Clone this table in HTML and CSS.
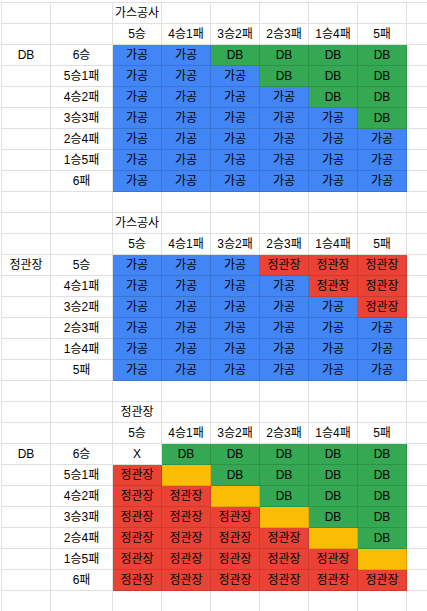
FILE: index.html
```html
<!DOCTYPE html>
<html lang="ko">
<head>
	<meta charset="UTF-8">
	<title>시나리오</title>
	<link rel="stylesheet" href="styles.css">
</head>
<body>
	<table class="sheet">
		<colgroup>
			<col class="c-a"><col class="c-b">
			<col class="c-n"><col class="c-n"><col class="c-n"><col class="c-n"><col class="c-n"><col class="c-n">
			<col class="c-n">
		</colgroup>
		<!--가스공사 vs DB-->
		<tr><td></td><td></td><td>가스공사</td><td></td><td></td><td></td><td></td><td></td><td></td></tr>
		<tr><td></td><td></td><td>5승</td><td>4승1패</td><td>3승2패</td><td>2승3패</td><td>1승4패</td><td>5패</td><td></td></tr>
		<tr><td>DB</td><td>6승</td><td class="b">가공</td><td class="b">가공</td><td class="g">DB</td><td class="g">DB</td><td class="g">DB</td><td class="g">DB</td><td></td></tr>
		<tr><td></td><td>5승1패</td><td class="b">가공</td><td class="b">가공</td><td class="b">가공</td><td class="g">DB</td><td class="g">DB</td><td class="g">DB</td><td></td></tr>
		<tr><td></td><td>4승2패</td><td class="b">가공</td><td class="b">가공</td><td class="b">가공</td><td class="b">가공</td><td class="g">DB</td><td class="g">DB</td><td></td></tr>
		<tr><td></td><td>3승3패</td><td class="b">가공</td><td class="b">가공</td><td class="b">가공</td><td class="b">가공</td><td class="b">가공</td><td class="g">DB</td><td></td></tr>
		<tr><td></td><td>2승4패</td><td class="b">가공</td><td class="b">가공</td><td class="b">가공</td><td class="b">가공</td><td class="b">가공</td><td class="b">가공</td><td></td></tr>
		<tr><td></td><td>1승5패</td><td class="b">가공</td><td class="b">가공</td><td class="b">가공</td><td class="b">가공</td><td class="b">가공</td><td class="b">가공</td><td></td></tr>
		<tr><td></td><td>6패</td><td class="b">가공</td><td class="b">가공</td><td class="b">가공</td><td class="b">가공</td><td class="b">가공</td><td class="b">가공</td><td></td></tr>
		<tr><td></td><td></td><td></td><td></td><td></td><td></td><td></td><td></td><td></td></tr>
		<!--가스공사 vs 정관장-->
		<tr><td></td><td></td><td>가스공사</td><td></td><td></td><td></td><td></td><td></td><td></td></tr>
		<tr><td></td><td></td><td>5승</td><td>4승1패</td><td>3승2패</td><td>2승3패</td><td>1승4패</td><td>5패</td><td></td></tr>
		<tr><td>정관장</td><td>5승</td><td class="b">가공</td><td class="b">가공</td><td class="b">가공</td><td class="r">정관장</td><td class="r">정관장</td><td class="r">정관장</td><td></td></tr>
		<tr><td></td><td>4승1패</td><td class="b">가공</td><td class="b">가공</td><td class="b">가공</td><td class="b">가공</td><td class="r">정관장</td><td class="r">정관장</td><td></td></tr>
		<tr><td></td><td>3승2패</td><td class="b">가공</td><td class="b">가공</td><td class="b">가공</td><td class="b">가공</td><td class="b">가공</td><td class="r">정관장</td><td></td></tr>
		<tr><td></td><td>2승3패</td><td class="b">가공</td><td class="b">가공</td><td class="b">가공</td><td class="b">가공</td><td class="b">가공</td><td class="b">가공</td><td></td></tr>
		<tr><td></td><td>1승4패</td><td class="b">가공</td><td class="b">가공</td><td class="b">가공</td><td class="b">가공</td><td class="b">가공</td><td class="b">가공</td><td></td></tr>
		<tr><td></td><td>5패</td><td class="b">가공</td><td class="b">가공</td><td class="b">가공</td><td class="b">가공</td><td class="b">가공</td><td class="b">가공</td><td></td></tr>
		<tr><td></td><td></td><td></td><td></td><td></td><td></td><td></td><td></td><td></td></tr>
		<!--정관장 vs DB-->
		<tr><td></td><td></td><td>정관장</td><td></td><td></td><td></td><td></td><td></td><td></td></tr>
		<tr><td></td><td></td><td>5승</td><td>4승1패</td><td>3승2패</td><td>2승3패</td><td>1승4패</td><td>5패</td><td></td></tr>
		<tr><td>DB</td><td>6승</td><td>X</td><td class="g">DB</td><td class="g">DB</td><td class="g">DB</td><td class="g">DB</td><td class="g">DB</td><td></td></tr>
		<tr><td></td><td>5승1패</td><td class="r">정관장</td><td class="y"></td><td class="g">DB</td><td class="g">DB</td><td class="g">DB</td><td class="g">DB</td><td></td></tr>
		<tr><td></td><td>4승2패</td><td class="r">정관장</td><td class="r">정관장</td><td class="y"></td><td class="g">DB</td><td class="g">DB</td><td class="g">DB</td><td></td></tr>
		<tr><td></td><td>3승3패</td><td class="r">정관장</td><td class="r">정관장</td><td class="r">정관장</td><td class="y"></td><td class="g">DB</td><td class="g">DB</td><td></td></tr>
		<tr><td></td><td>2승4패</td><td class="r">정관장</td><td class="r">정관장</td><td class="r">정관장</td><td class="r">정관장</td><td class="y"></td><td class="g">DB</td><td></td></tr>
		<tr><td></td><td>1승5패</td><td class="r">정관장</td><td class="r">정관장</td><td class="r">정관장</td><td class="r">정관장</td><td class="r">정관장</td><td class="y"></td><td></td></tr>
		<tr><td></td><td>6패</td><td class="r">정관장</td><td class="r">정관장</td><td class="r">정관장</td><td class="r">정관장</td><td class="r">정관장</td><td class="r">정관장</td><td></td></tr>
		<tr><td></td><td></td><td></td><td></td><td></td><td></td><td></td><td></td><td></td></tr>
	</table>
</body>
</html>
```
FILE: styles.css
```css
*{
	padding: 0;
	margin: 0;
	box-sizing: border-box;
}
body{
	background-color: #fff;
	overflow: hidden;
	font-family: "Liberation Sans", "Noto Sans CJK KR", sans-serif;
	font-size: 12px;
	color: #000;
}
.sheet{
	margin: 2px 0 0 1px;
	border-collapse: separate;
	border-spacing: 0;
	table-layout: fixed;
	width: 455px;
	border-top: 1px solid #e1e1e1;
	border-left: 1px solid #e1e1e1;
}
.c-a{
	width: 49px;
}
.c-b{
	width: 62px;
}
.c-n{
	width: 49px;
}
.sheet td{
	height: 21px;
	border-right: 1px solid rgba(0,0,0,0.12);
	border-bottom: 1px solid rgba(0,0,0,0.12);
	text-align: center;
	vertical-align: middle;
	white-space: nowrap;
	overflow: hidden;
	line-height: 20px;
}
.sheet td.b{
	background-color: #4285f4;
}
.sheet td.g{
	background-color: #34a853;
}
.sheet td.r{
	background-color: #ea4335;
}
.sheet td.y{
	background-color: #fbbc04;
}
```
